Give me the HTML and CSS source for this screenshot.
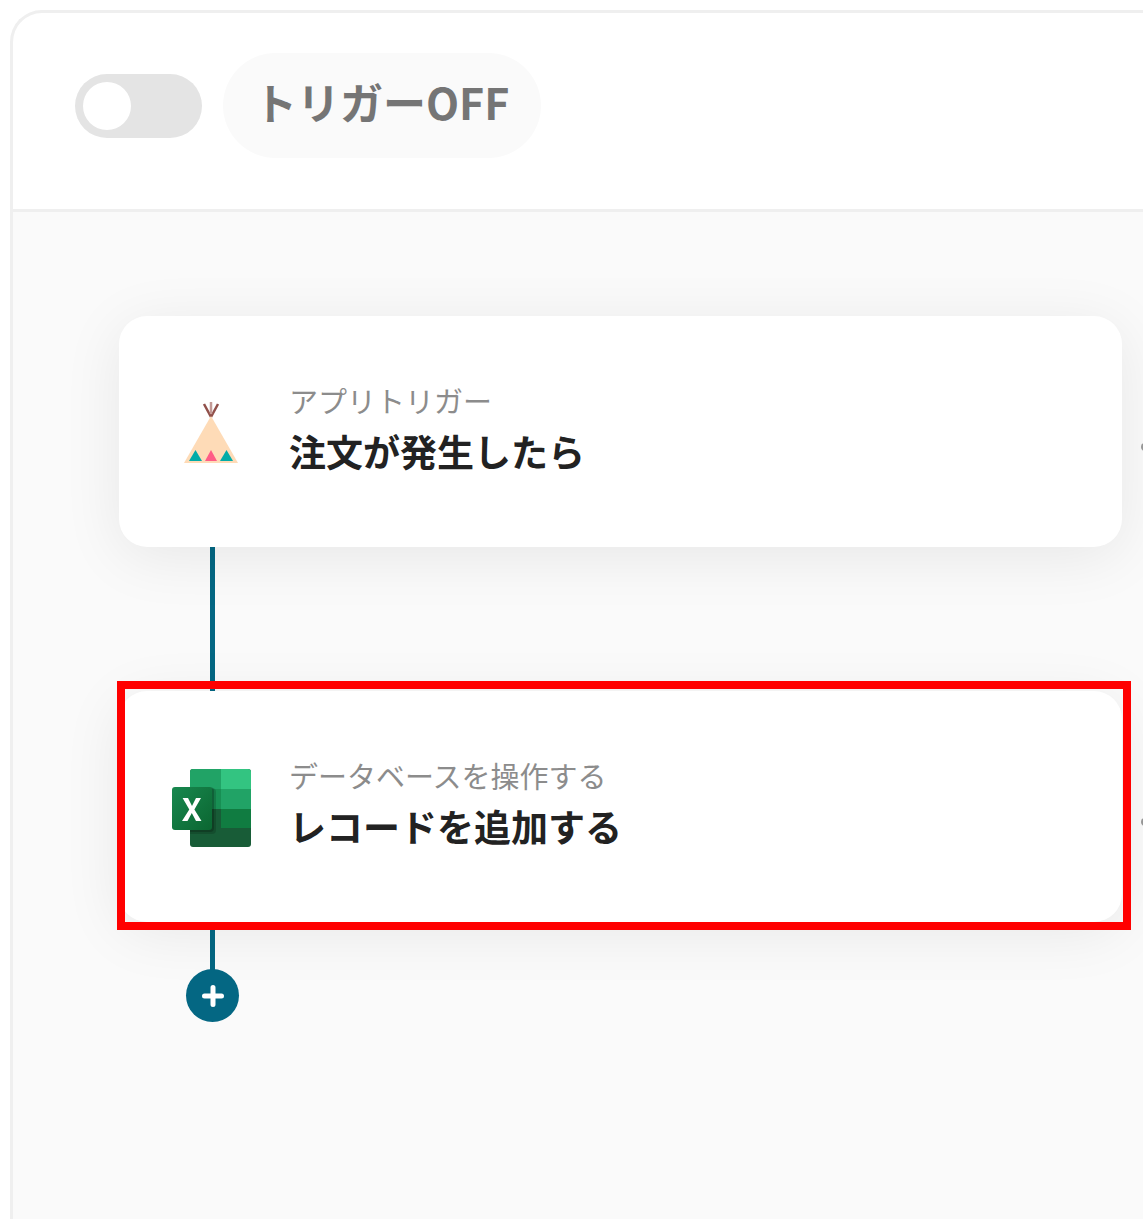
FILE: index.html
```html
<!DOCTYPE html>
<html lang="ja">
<head>
  <meta charset="UTF-8">
  <meta name="viewport" content="width=device-width, initial-scale=1.0">
  <title>フローボット</title>
  <link rel="stylesheet" href="styles.css">
</head>
<body>

  <main class="panel">
    <header class="panel-header">
      <input type="checkbox" class="toggle" id="trigger-toggle">
      <label class="trigger-label" for="trigger-toggle">トリガーOFF</label>
    </header>

    <div class="flow">
      <div class="step-row">
        <section class="step">
          <svg class="step-icon" viewBox="0 0 80 80" aria-hidden="true">
            <path d="M40 25L33 12M40 25L47 12" stroke="#91504a" stroke-width="2.500" fill="none"/>
            <path d="M40 22V10" stroke="#c39a96" stroke-width="2.500" fill="none"/>
            <path d="M40 24L67 71H13z" fill="#fedbb7"/>
            <path d="M24.500 58L31 69H18z" fill="#02aca8"/>
            <path d="M40 58L46 69H34z" fill="#ff5c86"/>
            <path d="M55.500 58L62 69H49z" fill="#02aca8"/>
          </svg>
          <div class="step-text">
            <p class="step-type">アプリトリガー</p>
            <h2 class="step-title">注文が発生したら</h2>
          </div>
        </section>
        <button class="step-menu" aria-label="メニュー"></button>
      </div>

      <div class="line"></div>

      <div class="step-row">
        <section class="step selected">
          <svg class="step-icon" viewBox="0 0 80 80" aria-hidden="true">
            <defs>
              <clipPath id="book"><rect x="19" y="2" width="61" height="78" rx="3"/></clipPath>
              <linearGradient id="tile" x1="0" y1="0" x2="1" y2="1">
                <stop offset="0" stop-color="#18884f"/>
                <stop offset="1" stop-color="#0b6631"/>
              </linearGradient>
            </defs>
            <g clip-path="url(#book)">
              <rect x="19" y="2" width="61" height="78" fill="#185c37"/>
              <rect x="19" y="2" width="31" height="40" fill="#21a366"/>
              <rect x="50" y="2" width="30" height="20" fill="#33c481"/>
              <rect x="50" y="22" width="30" height="20" fill="#21a366"/>
              <rect x="19" y="22" width="31" height="20" fill="#107c41" opacity="0.5"/>
              <rect x="50" y="42" width="30" height="19" fill="#107c41"/>
              <rect x="16" y="21" width="29" height="46" rx="4" fill="#000" opacity="0.15"/>
              <rect x="16" y="20" width="27" height="45" rx="4" fill="#000" opacity="0.2"/>
            </g>
            <rect x="1" y="20" width="40" height="43" rx="3" fill="url(#tile)"/>
            <path d="M11 54L18.300 42.500L11.600 31H17L21 39L25 31H30L23.400 42.500L30.500 54H25L20.800 46L16.500 54z" fill="#fff"/>
          </svg>
          <div class="step-text">
            <p class="step-type">データベースを操作する</p>
            <h2 class="step-title">レコードを追加する</h2>
          </div>
        </section>
        <button class="step-menu" aria-label="メニュー"></button>
      </div>

      <div class="line line-short"></div>

      <button class="add-step" aria-label="ステップを追加">
        <svg viewBox="0 0 22 22" aria-hidden="true">
          <path d="M11 2.500V19.500M2.500 11H19.500" stroke="#fff" stroke-width="5" stroke-linecap="round"/>
        </svg>
      </button>
    </div>
  </main>

</body>
</html>
```
FILE: styles.css
```css
* {
  box-sizing: border-box;
}

body {
  margin: 0;
  padding: 10px 0 0 10px;
  min-height: 100vh;
  display: flex;
  background: #fff;
  font-family: "Noto Sans CJK JP", sans-serif;
  overflow-x: hidden;
}

.panel {
  flex: 1;
  min-width: 0;
  display: flex;
  flex-direction: column;
  border: 3px solid #efefef;
  border-right: none;
  border-bottom: none;
  border-top-left-radius: 32px;
  overflow: hidden;
}

.panel-header {
  display: flex;
  align-items: center;
  gap: 21px;
  padding: 40px 62px 51px;
  border-bottom: 3px solid #efefef;
}

/* on/off switch */
.toggle {
  appearance: none;
  display: flex;
  align-items: center;
  width: 127px;
  height: 64px;
  margin: 0;
  padding: 0 8px;
  border-radius: 32px;
  background: #e4e4e4;
  cursor: pointer;
}

.toggle::before {
  content: "";
  width: 48px;
  height: 48px;
  border-radius: 50%;
  background: #fff;
}

.toggle:checked {
  justify-content: flex-end;
  background: #046783;
}

.trigger-label {
  padding: 16px 32px 25px 31px;
  border-radius: 53px;
  background: #fafafa;
  color: #757575;
  font-size: 43px;
  font-weight: bold;
  line-height: 64px;
  white-space: nowrap;
}

.flow {
  flex: 1;
  padding: 104px 0 40px 106px;
  background: #fafafa;
}

.step-row {
  display: flex;
  gap: 19px;
}

.step {
  position: relative;
  flex: 1;
  min-width: 0;
  min-height: 231px;
  display: flex;
  align-items: center;
  gap: 38px;
  padding: 0 52px;
  border-radius: 28px;
  background: #fff;
  box-shadow: 0 10px 60px rgba(0, 0, 0, 0.08);
}

.step.selected::after {
  content: "";
  position: absolute;
  inset: -10px -9px -8px -2px;
  border: 8px solid #f00;
}

.step-icon {
  flex: none;
  width: 80px;
  height: 80px;
}

.step-text {
  padding-bottom: 12px;
}

.step-type,
.step-title {
  margin: 0;
  line-height: 51px;
}

.step-type {
  color: #8c8c8c;
  font-size: 29px;
  font-weight: normal;
}

.step-title {
  color: #222;
  font-size: 37px;
  font-weight: bold;
}

.step-menu {
  align-self: center;
  width: 8px;
  height: 8px;
  margin: 30px -6px 0 0;
  padding: 0;
  border: none;
  border-radius: 50%;
  background: #999;
}

.line {
  width: 5px;
  height: 144px;
  margin-left: 91px;
  background: #046783;
}

.line-short {
  height: 50px;
}

.add-step {
  display: flex;
  align-items: center;
  justify-content: center;
  width: 53px;
  height: 53px;
  margin: -3px 0 0 67px;
  padding: 0;
  border: none;
  border-radius: 50%;
  background: #046783;
  cursor: pointer;
}

.add-step svg {
  width: 22px;
  height: 22px;
}
```
